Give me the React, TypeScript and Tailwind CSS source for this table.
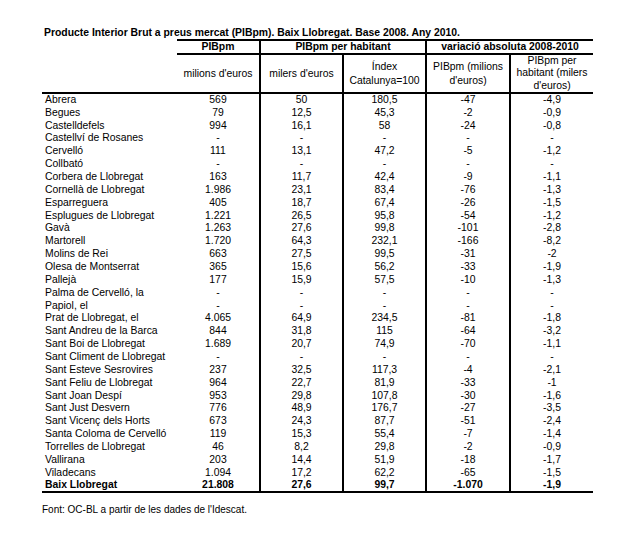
import React from "react";

type Row = [string, string, string, string, string, string];

const rows: Row[] = [
  ["Abrera", "569", "50", "180,5", "-47", "-4,9"],
  ["Begues", "79", "12,5", "45,3", "-2", "-0,9"],
  ["Castelldefels", "994", "16,1", "58", "-24", "-0,8"],
  ["Castellví de Rosanes", "-", "-", "-", "-", "-"],
  ["Cervelló", "111", "13,1", "47,2", "-5", "-1,2"],
  ["Collbató", "-", "-", "-", "-", "-"],
  ["Corbera de Llobregat", "163", "11,7", "42,4", "-9", "-1,1"],
  ["Cornellà de Llobregat", "1.986", "23,1", "83,4", "-76", "-1,3"],
  ["Esparreguera", "405", "18,7", "67,4", "-26", "-1,5"],
  ["Esplugues de Llobregat", "1.221", "26,5", "95,8", "-54", "-1,2"],
  ["Gavà", "1.263", "27,6", "99,8", "-101", "-2,8"],
  ["Martorell", "1.720", "64,3", "232,1", "-166", "-8,2"],
  ["Molins de Rei", "663", "27,5", "99,5", "-31", "-2"],
  ["Olesa de Montserrat", "365", "15,6", "56,2", "-33", "-1,9"],
  ["Pallejà", "177", "15,9", "57,5", "-10", "-1,3"],
  ["Palma de Cervelló, la", "-", "-", "-", "-", "-"],
  ["Papiol, el", "-", "-", "-", "-", "-"],
  ["Prat de Llobregat, el", "4.065", "64,9", "234,5", "-81", "-1,8"],
  ["Sant Andreu de la Barca", "844", "31,8", "115", "-64", "-3,2"],
  ["Sant Boi de Llobregat", "1.689", "20,7", "74,9", "-70", "-1,1"],
  ["Sant Climent de Llobregat", "-", "-", "-", "-", "-"],
  ["Sant Esteve Sesrovires", "237", "32,5", "117,3", "-4", "-2,1"],
  ["Sant Feliu de Llobregat", "964", "22,7", "81,9", "-33", "-1"],
  ["Sant Joan Despí", "953", "29,8", "107,8", "-30", "-1,6"],
  ["Sant Just Desvern", "776", "48,9", "176,7", "-27", "-3,5"],
  ["Sant Vicenç dels Horts", "673", "24,3", "87,7", "-51", "-2,4"],
  ["Santa Coloma de Cervelló", "119", "15,3", "55,4", "-7", "-1,4"],
  ["Torrelles de Llobregat", "46", "8,2", "29,8", "-2", "-0,9"],
  ["Vallirana", "203", "14,4", "51,9", "-18", "-1,7"],
  ["Viladecans", "1.094", "17,2", "62,2", "-65", "-1,5"],
];

const total: Row = ["Baix Llobregat", "21.808", "27,6", "99,7", "-1.070", "-1,9"];

function DataRow({ r, bold, last }: { r: Row; bold?: boolean; last?: boolean }) {
  const b = bold ? "font-bold" : "font-normal";
  const bottom = last ? "border-b-2 border-b-black" : "";
  return (
    <tr className="h-[12.87px]">
      <td className={`p-0 pl-[3px] text-left leading-[12px] whitespace-nowrap ${b} ${bottom}`}>{r[0]}</td>
      <td className={`p-0 text-center leading-[12px] ${b} ${bottom}`}>{r[1]}</td>
      <td className={`p-0 text-center leading-[12px] border-l-2 border-l-black ${b} ${bottom}`}>{r[2]}</td>
      <td className={`p-0 text-center leading-[12px] border-l-2 border-l-black ${b} ${bottom}`}>{r[3]}</td>
      <td className={`p-0 text-center leading-[12px] border-l-2 border-l-black ${b} ${bottom}`}>{r[4]}</td>
      <td className={`p-0 text-center leading-[12px] border-l-2 border-l-black ${b} ${bottom}`}>{r[5]}</td>
    </tr>
  );
}

export default function App() {
  return (
    <div className="w-[642px] h-[535px] bg-white text-black pl-[42px] pt-[26px] font-['Liberation_Sans',Arial,sans-serif] text-[10.4px]">
      <div className="font-bold text-[10.4px] leading-[13px] pl-[2px] whitespace-nowrap">
        Producte Interior Brut a preus mercat (PIBpm). Baix Llobregat. Base 2008. Any 2010.
      </div>
      <table className="table-fixed border-collapse w-[551px]">
        <colgroup>
          <col className="w-[135px]" />
          <col className="w-[83px]" />
          <col className="w-[83px]" />
          <col className="w-[83px]" />
          <col className="w-[84px]" />
          <col className="w-[83px]" />
        </colgroup>
        <thead>
          <tr className="h-[13px]">
            <th className="p-0"></th>
            <th className="p-0 text-center font-bold leading-[12px] border-t-2 border-t-black border-b-2 border-b-black">PIBpm</th>
            <th colSpan={2} className="p-0 text-center font-bold leading-[12px] border-t-2 border-t-black border-b-2 border-b-black border-l-2 border-l-black">
              PIBpm per habitant
            </th>
            <th colSpan={2} className="p-0 text-center font-bold leading-[12px] border-t-2 border-t-black border-b-2 border-b-black border-l-2 border-l-black">
              variació absoluta 2008-2010
            </th>
          </tr>
          <tr className="h-[37px]">
            <th className="p-0 border-b-2 border-b-black"></th>
            <th className="p-0 text-center font-normal leading-[13px] border-b-2 border-b-black">milions d'euros</th>
            <th className="p-0 text-center font-normal leading-[13px] border-b-2 border-b-black border-l-2 border-l-black">milers d'euros</th>
            <th className="p-0 text-center font-normal leading-[13.5px] border-b-2 border-b-black border-l-2 border-l-black">
              Índex
              <br />
              Catalunya=100
            </th>
            <th className="p-0 text-center font-normal leading-[13.5px] border-b-2 border-b-black border-l-2 border-l-black">
              PIBpm (milions
              <br />
              d'euros)
            </th>
            <th className="p-0 text-center font-normal leading-[12.4px] border-b-2 border-b-black border-l-2 border-l-black">
              PIBpm per
              <br />
              habitant (milers
              <br />
              d'euros)
            </th>
          </tr>
        </thead>
        <tbody>
          {rows.map((r) => (
            <DataRow key={r[0]} r={r} />
          ))}
          <DataRow r={total} bold last />
        </tbody>
      </table>
      <div className="mt-[11px] text-[10px] leading-[12px] whitespace-nowrap">
        Font: OC-BL a partir de les dades de l'Idescat.
      </div>
    </div>
  );
}
